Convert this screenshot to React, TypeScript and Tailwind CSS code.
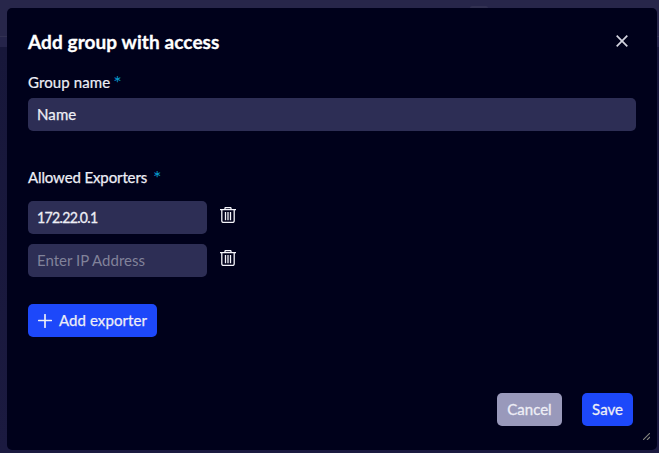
import React from "react";

function TrashIcon() {
  return (
    <svg width="16" height="16" viewBox="0 0 16 16" fill="none" stroke="currentColor" strokeWidth="1.3">
      <path d="M0 2.7H16M5 2.6V1.2Q5 .6 5.6 .6H10.4Q11 .6 11 1.2V2.6M1.8 3V14Q1.8 15.4 3.2 15.4H12.8Q14.2 15.4 14.2 14V3M5.5 5V13.2M8 5V13.2M10.5 5V13.2" />
    </svg>
  );
}

function RequiredMark({ className }: { className: string }) {
  return <span className={`text-[20px] leading-[18px] text-[#079acb] ${className}`}>*</span>;
}

function ExporterRow({ value, placeholder }: { value?: string; placeholder?: string }) {
  return (
    <div className="flex h-[33px] items-center">
      <div className="flex h-[33px] w-[179px] items-center rounded-[5px] bg-[#2d2e55] pb-[2px] pl-[9px] text-[15px] leading-[20px]">
        {value ? (
          <span className="inline-block origin-left scale-x-[0.94] tracking-[-0.72px] [-webkit-text-stroke:0.3px_currentColor]">{value}</span>
        ) : (
          <span className="tracking-[0px] text-[#81829a]">{placeholder}</span>
        )}
      </div>
      <button aria-label="Delete exporter" className="-mt-[5px] ml-[13px] text-[#f4f4fa]">
        <TrashIcon />
      </button>
    </div>
  );
}

export default function App() {
  return (
    <div className="flex h-[453px] w-[659px] flex-col overflow-hidden bg-[linear-gradient(to_bottom,#27264a_0px,#27264a_36px,#323152_36px,#323152_37px,#25244a_37px,#25244a_47px,#17173a_47px,#1b1a40_453px)] pt-2 pl-[7px] font-['Lato','Noto_Sans',sans-serif] text-[#eeeef6]">
      <div className="absolute left-[470px] top-[6px] h-[2px] w-[18px] rounded-t bg-[#323152]" />
      <main className="relative flex h-[442px] w-[650px] flex-col rounded-[5px] bg-[#00011b] px-[21px]">
        <header className="flex h-[66px] items-center justify-between">
          <h1 className="mt-[2px] text-[19px] leading-[24px] font-bold tracking-[0.09px] text-white [-webkit-text-stroke:0.3px_currentColor]">Add group with access</h1>
          <button aria-label="Close" className="mr-[8px]">
            <svg width="12" height="12" viewBox="0 0 12 12" fill="none" stroke="#d3d4df" strokeWidth="1.7">
              <path d="M.7 .7L11.3 11.3M11.3 .7L.7 11.3" />
            </svg>
          </button>
        </header>
        <label className="-mt-px flex h-[25px] items-start text-[15px] leading-[18px]">
          <span className="tracking-[0.1px] [-webkit-text-stroke:0.2px_currentColor]">Group name</span>
          <RequiredMark className="ml-[3px]" />
        </label>
        <div className="flex h-[33px] w-[608px] shrink-0 items-center rounded-[5px] bg-[#2d2e55] pl-[9px] text-[15px]">
          <span className="tracking-[0.1px] [-webkit-text-stroke:0.25px_currentColor]">Name</span>
        </div>
        <div className="mt-[37px] flex h-[33px] items-start text-[15px] leading-[18px]">
          <span className="tracking-[-0.12px] [-webkit-text-stroke:0.25px_currentColor]">Allowed Exporters</span>
          <RequiredMark className="ml-[6px]" />
        </div>
        <div className="flex flex-col gap-[10px]">
          <ExporterRow value="172.22.0.1" />
          <ExporterRow placeholder="Enter IP Address" />
        </div>
        <button className="mt-[27px] flex h-[33px] w-[129px] items-center rounded-[5px] bg-[#1d48fa] pl-[10px] text-[15px]">
          <svg width="14" height="14" viewBox="0 0 14 14" stroke="currentColor" strokeWidth="1.7" strokeLinecap="round">
            <path d="M.7 6.5H13.3M7 .7V13.3" />
          </svg>
          <span className="mb-px ml-[7px] tracking-[0.08px] whitespace-nowrap [-webkit-text-stroke:0.25px_currentColor]">Add exporter</span>
        </button>
        <footer className="mt-[56px] mr-[3px] flex justify-end gap-[20px] text-[15px] [-webkit-text-stroke:0.3px_currentColor]">
          <button className="h-[33px] w-[65px] rounded-[5px] bg-[#9999bb] pb-px">Cancel</button>
          <button className="h-[33px] w-[51px] rounded-[5px] bg-[#1d48fa] pb-px">Save</button>
        </footer>
        <svg className="absolute right-[7px] bottom-[10px]" width="7" height="7" viewBox="0 0 7 7" stroke="#85867f" strokeWidth="1.1">
          <path d="M0 7L7 0M4 7L7 4" />
        </svg>
      </main>
    </div>
  );
}
